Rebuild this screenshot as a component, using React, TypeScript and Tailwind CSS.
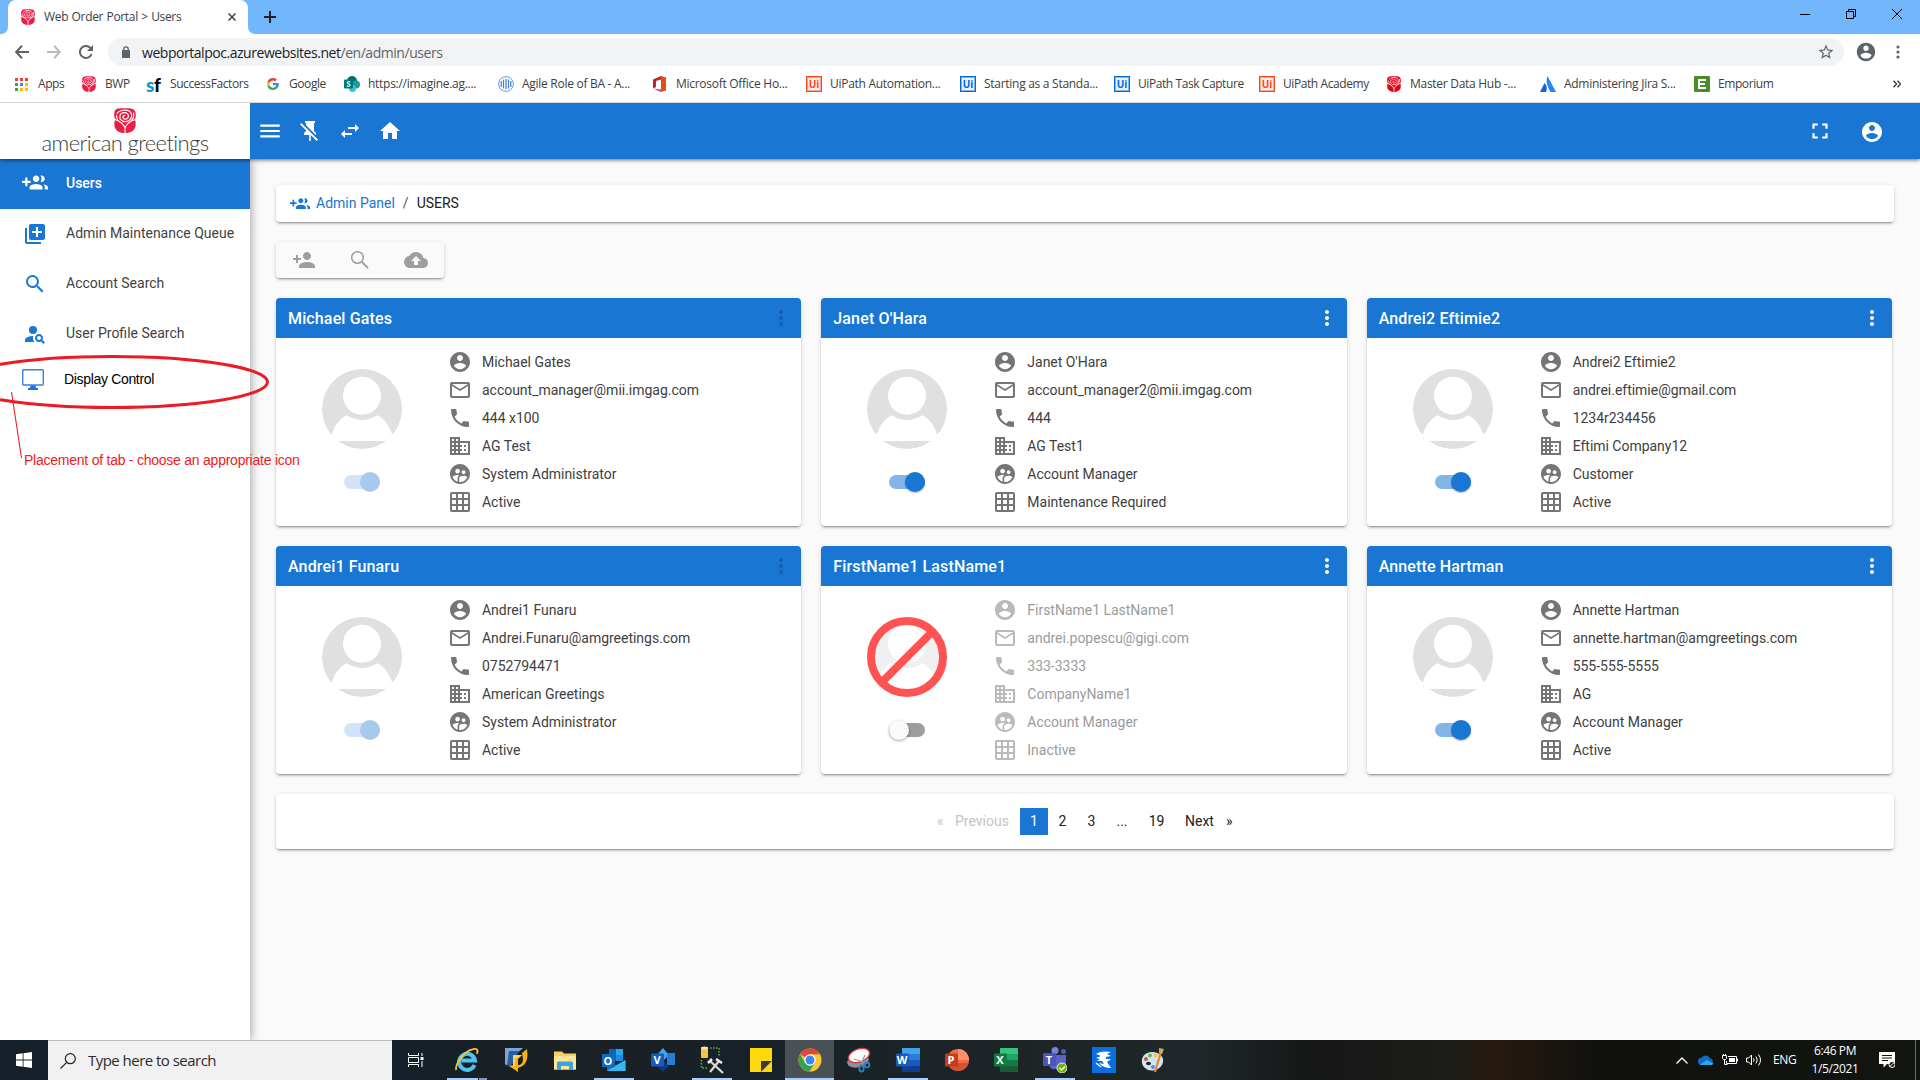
import React from 'react';
import type { ReactNode } from 'react';
import {
  MdLibraryAdd, MdSearch, MdPersonSearch, MdHome, MdFullscreen,
  MdPersonAdd, MdBackup, MdMoreVert, MdMailOutline, MdPhone, MdBusiness,
  MdGridOn, MdSwapHoriz, MdMenu, MdStarBorder,
} from 'react-icons/md';

/* ---------- shared icons ---------- */

function GroupAdd({ className }: { className?: string }) {
  return (
    <svg viewBox="0 0 24 24" className={className} fill="currentColor">
      <path d="M8 10H5V7H3v3H0v2h3v3h2v-3h3v-2zm10 1c1.66 0 2.99-1.34 2.99-3S19.66 5 18 5c-.32 0-.63.05-.91.14.57.81.9 1.79.9 2.86s-.34 2.04-.9 2.86c.28.09.59.14.91.14zm-5 0c1.66 0 2.99-1.34 2.99-3S14.66 5 13 5c-1.66 0-3 1.34-3 3s1.34 3 3 3zm6.62 2.160c.83.73 1.38 1.660 1.38 2.840v2h3v-2c0-1.540-2.370-2.490-4.380-2.840zM13 13c-2 0-6 1-6 3v2h12v-2c0-2-4-3-6-3z" />
    </svg>
  );
}

function AccountCircle({ className }: { className?: string }) {
  return (
    <svg viewBox="0 0 24 24" className={className} fill="currentColor">
      <path d="M12 2C6.48 2 2 6.48 2 12s4.48 10 10 10 10-4.48 10-10S17.52 2 12 2zm0 3c1.66 0 3 1.34 3 3s-1.34 3-3 3-3-1.34-3-3 1.34-3 3-3zm0 14.2c-2.5 0-4.71-1.28-6-3.22.03-1.99 4-3.08 6-3.08 1.99 0 5.97 1.09 6 3.08-1.29 1.94-3.5 3.22-6 3.22z" />
    </svg>
  );
}

function SupervisedCircle({ className }: { className?: string }) {
  return (
    <svg viewBox="0 0 24 24" className={className} fill="currentColor">
      <path d="M11.99 2c-5.52 0-10 4.48-10 10s4.48 10 10 10 10-4.48 10-10-4.48-10-10-10zm3.61 6.34c1.07 0 1.93.86 1.93 1.93 0 1.07-.86 1.93-1.93 1.93-1.07 0-1.93-.86-1.93-1.93-.01-1.07.86-1.93 1.93-1.93zm-6-1.58c1.3 0 2.36 1.06 2.36 2.36 0 1.3-1.06 2.36-2.36 2.36s-2.36-1.06-2.36-2.36c0-1.31 1.05-2.36 2.36-2.36zm0 9.13v3.75c-2.4-.75-4.3-2.6-5.14-4.96 1.05-1.12 3.67-1.69 5.14-1.69.53 0 1.2.08 1.9.22-1.64.87-1.9 2.02-1.9 2.68zM11.99 20c-.27 0-.53-.01-.79-.04v-4.07c0-1.42 2.94-2.13 4.4-2.13 1.07 0 2.92.39 3.84 1.15-1.17 2.97-4.06 5.09-7.45 5.09z" />
    </svg>
  );
}

function Rose({ className, color = '#ee1b45' }: { className?: string; color?: string }) {
  return (
    <svg viewBox="0 0 22 25" className={className} fill="none">
      <path d="M4 .6C8 .2 15 0 18 .8 21 1.600 22 5 21.800 8c-.1 1.500-.6 2.500-1.200 3.400C22 13 22 17 21 20c-1.500 3-5 5-10 5S2.500 23 1 20c-1-3-1-7 .5-8.600C.4 10 0 8 .2 5.500.4 3 1.500.900 4 .6z" fill={color} />
      <g stroke="#fff" strokeWidth="1.150" strokeLinecap="round">
        <path d="M3 5.500C5 2.500 10 1.600 13.500 2.400c4 .9 5 4.600 3.500 7.600-1.300 2.600-4 3.800-6.500 3.600-3-.3-5-2.500-4.700-5 .2-2.300 2.200-4 4.700-4 2.300 0 4 1.500 3.900 3.500-.1 1.900-1.500 3.100-3.200 3-1.500-.1-2.400-1.200-2.200-2.300.2-.9 1-1.400 1.800-1.200" />
        <path d="M1.200 11.800c3 .8 7.500 3.500 9.800 7.700 2.300-4.200 6.800-6.900 9.800-7.700M11 19.500V25M2.600 7.500c-.4 3 1.500 6.500 5.400 7.800M19.600 5c.5 4.500-1.600 8.500-5.600 10.300" />
      </g>
    </svg>
  );
}

/* ---------- browser chrome ---------- */

function TabStrip() {
  return (
    <div className="flex h-[34px] items-stretch bg-[#72b7fc]">
      <div className="flex w-2 items-end bg-white"><div className="h-full w-2 rounded-br-[7px] bg-[#72b7fc]" /></div>
      <div className="flex w-[240px] items-center rounded-t-lg bg-white pl-[13px]">
        <Rose className="h-4 w-[14px]" />
        <span className="ml-[9px] w-[184px] whitespace-nowrap text-[12px] tracking-[-0.33px] text-[#3c4043] [word-spacing:0.6px]">Web Order Portal &gt; Users</span>
        <svg viewBox="0 0 8 8" className="h-2 w-2" stroke="#3c4043" strokeWidth="1.500"><path d="M.5.5l7 7M7.500.5l-7 7" /></svg>
      </div>
      <div className="flex flex-1 bg-white">
        <div className="flex flex-1 items-center rounded-bl-[7px] bg-[#72b7fc] pl-4">
          <svg viewBox="0 0 12 12" className="h-3 w-3" stroke="#202124" strokeWidth="2"><path d="M6 0v12M0 6h12" /></svg>
          <div className="ml-auto flex items-center gap-9 pr-[18px] pb-[6px] text-black">
            <svg viewBox="0 0 10 10" className="h-[10px] w-[10px]" stroke="currentColor"><path d="M0 5.500h10" /></svg>
            <svg viewBox="0 0 10 10" className="h-[10px] w-[10px]" stroke="currentColor" fill="none"><path d="M.5 2.500h7v7h-7zM2.500 2.500v-2h7v7h-2" /></svg>
            <svg viewBox="0 0 10 10" className="h-[10px] w-[10px]" stroke="currentColor"><path d="M0 0l10 10M10 0L0 10" /></svg>
          </div>
        </div>
      </div>
    </div>
  );
}

function AddressRow() {
  return (
    <div className="flex h-9 items-center text-[#5f6368]">
      <div className="flex w-[108px] items-center gap-[18px] pl-[15px]">
        <svg viewBox="0 0 14 14" className="h-[14px] w-[14px]" fill="none" stroke="#5f6368" strokeWidth="2"><path d="M14 7H1.500M7 .8L1.200 7 7 13.200" /></svg>
        <svg viewBox="0 0 14 14" className="h-[14px] w-[14px]" fill="none" stroke="#babcbe" strokeWidth="2"><path d="M0 7h12.500M7 .8L12.800 7 7 13.200" /></svg>
        <svg viewBox="0 0 14 14" className="h-[14px] w-[14px]" fill="none" stroke="#5f6368" strokeWidth="2"><path d="M12.600 9A6 6 0 1 1 11.300 2.800L12.500 4" /><path d="M14 0v6H8z" fill="#5f6368" stroke="none" /></svg>
      </div>
      <div className="flex h-7 w-[1736px] items-center rounded-full bg-[#f1f3f4] pl-[14px] pr-[9px]">
        <svg viewBox="0 0 8 12" className="h-3 w-2"><path d="M1.800 5V3a2.200 2.200 0 0 1 4.400 0v2" fill="none" stroke="#5f6368" strokeWidth="1.300" /><path d="M0 4h8v8H0z" fill="#5f6368" /></svg>
        <span className="ml-3 whitespace-nowrap text-[14px] tracking-[-0.46px] text-[#5f6368]"><span className="text-[#202124]">webportalpoc.azurewebsites.net</span>/en/admin/users</span>
        <MdStarBorder className="ml-auto h-[18px] w-[18px]" />
      </div>
      <AccountCircle className="ml-[11px] h-[22px] w-[22px]" />
      <svg viewBox="0 0 4 14" className="ml-[19px] h-[14px] w-1" fill="#5f6368"><circle cx="2" cy="2" r="1.600" /><circle cx="2" cy="7" r="1.600" /><circle cx="2" cy="12" r="1.600" /></svg>
    </div>
  );
}

function UiBadge({ blue }: { blue?: boolean }) {
  return (
    <div className={blue ? 'h-4 w-4 bg-[#0067df] p-[1px] text-[#0067df]' : 'h-4 w-4 bg-[#fa4616] p-[1px] text-[#fa4616]'}>
      <div className={blue ? 'flex h-full w-full items-center justify-center border border-[#7fb3ef] bg-[#eaf3ff] text-[10px] font-bold leading-none' : 'flex h-full w-full items-center justify-center border border-[#fca28a] bg-[#fff0ec] text-[10px] font-bold leading-none'}>Ui</div>
    </div>
  );
}

const dotColors = ['#ea4335', '#ea4335', '#ea4335', '#34a853', '#4285f4', '#fbbc05', '#34a853', '#fbbc05', '#fbbc05'];

const bookmarks: { w: string; gap: string; label: string; icon: ReactNode }[] = [
  { w: 'w-[67px]', gap: 'gap-[10px]', label: 'Apps', icon: (
    <svg viewBox="0 0 13 13" className="h-[13px] w-[13px]">{dotColors.map((c, i) => <rect key={i} x={(i % 3) * 5} y={Math.floor(i / 3) * 5} width="3" height="3" fill={c} />)}</svg>) },
  { w: 'w-[64px]', gap: 'gap-[9px]', label: 'BWP', icon: <Rose className="h-4 w-[14px]" /> },
  { w: 'w-[121px]', gap: 'gap-[8px]', label: 'SuccessFactors', icon: (
    <div className="flex h-4 w-4 items-end font-['Lato'] text-[19px] font-black leading-[15px] tracking-[-0.5px]"><span className="text-[#0a9ad9]">s</span><span className="text-black">f</span></div>) },
  { w: 'w-[77px]', gap: 'gap-[10px]', label: 'Google', icon: (
    <svg viewBox="0 0 48 48" className="h-[12px] w-[12px]"><path fill="#4285f4" d="M47 24.500c0-1.600-.1-3.200-.4-4.700H24v9h12.900a11 11 0 0 1-4.800 7.200v6h7.700c4.600-4.200 7.200-10.300 7.200-17.500z" /><path fill="#34a853" d="M24 48c6.500 0 12-2.100 15.900-5.800l-7.700-6A14.500 14.500 0 0 1 10.500 28.600h-8v6.200A24 24 0 0 0 24 48z" /><path fill="#fbbc05" d="M10.500 28.600a14.400 14.400 0 0 1 0-9.200v-6.200h-8a24 24 0 0 0 0 21.600z" /><path fill="#ea4335" d="M24 9.500c3.500 0 6.700 1.200 9.200 3.600l6.900-6.900A24 24 0 0 0 2.500 13.200l8 6.200A14.300 14.300 0 0 1 24 9.500z" /></svg>) },
  { w: 'w-[154px]', gap: 'gap-[8px]', label: 'https://imagine.ag....', icon: (
    <svg viewBox="0 0 16 16" className="h-4 w-4"><circle cx="8" cy="5" r="5" fill="#036c70" /><circle cx="12" cy="8.500" r="4" fill="#1a9ba1" /><circle cx="8.500" cy="12.500" r="3.500" fill="#37c6d0" /><rect y="3.500" width="9" height="9" rx="1" fill="#03787c" /><path d="M6.200 6.100C5 5.300 3 5.700 3.100 6.800c.1 1.200 3 .9 3 2.300 0 1.200-2 1.500-3.200.6" stroke="#fff" fill="none" strokeWidth="1.100" /></svg>) },
  { w: 'w-[155px]', gap: 'gap-[8px]', label: 'Agile Role of BA - A...', icon: (
    <svg viewBox="0 0 16 16" className="h-4 w-4" fill="none" stroke="#5b9bea"><circle cx="8" cy="8" r="7.400" /><path d="M8 3v10M5.500 3.600v8.800M10.500 3.600v8.800M3.200 5v6M12.800 5v6" strokeWidth="1.200" stroke="#3f7be0" /></svg>) },
  { w: 'w-[153px]', gap: 'gap-[10px]', label: 'Microsoft Office Ho...', icon: (
    <svg viewBox="0 0 13 16" className="h-4 w-[13px]"><path d="M8 0L0 3.500v9L3 11V5l5-1.500z" fill="#c2261a" /><path d="M8 0l5 1.500v13L8 16z" fill="#e64a19" /><path d="M0 12.500L8 16v-2.500L3 13z" fill="#d13a72" /></svg>) },
  { w: 'w-[154px]', gap: 'gap-[8px]', label: 'UiPath Automation...', icon: <UiBadge /> },
  { w: 'w-[154px]', gap: 'gap-[8px]', label: 'Starting as a Standa...', icon: <UiBadge blue /> },
  { w: 'w-[145px]', gap: 'gap-[8px]', label: 'UiPath Task Capture', icon: <UiBadge blue /> },
  { w: 'w-[128px]', gap: 'gap-[8px]', label: 'UiPath Academy', icon: <UiBadge /> },
  { w: 'w-[153px]', gap: 'gap-[9px]', label: 'Master Data Hub -...', icon: <Rose className="h-4 w-[14px]" color="#e60012" /> },
  { w: 'w-[154px]', gap: 'gap-[8px]', label: 'Administering Jira S...', icon: (
    <svg viewBox="0 0 16 16" className="h-4 w-4"><path d="M7.500 0L16 16h-5.500C7 10 5.500 5 7.500 0z" fill="#2684ff" /><path d="M4.500 7C7 9.500 7.500 12.500 6 16H0z" fill="#1464dc" /></svg>) },
  { w: 'w-[100px]', gap: 'gap-[8px]', label: 'Emporium', icon: (
    <div className="flex h-4 w-4 items-center justify-center rounded-[1px] bg-[#4b8b2b]"><svg viewBox="0 0 8 10" className="h-[10px] w-2" stroke="#fff" strokeWidth="2" fill="none"><path d="M8 1H1v8h7M1 5h6" /></svg></div>) },
];

function BookmarksBar() {
  return (
    <div className="flex h-[33px] items-center border-b border-[#d5d7da] pb-[4px] pl-[15px]">
      {bookmarks.map((b) => (
        <div key={b.label} className={`flex shrink-0 items-center ${b.w} ${b.gap}`}>
          <div className="shrink-0">{b.icon}</div>
          <span className={b.label.endsWith('...') ? 'whitespace-nowrap text-[12px] tracking-[-0.28px] text-[#3c4043]' : 'whitespace-nowrap text-[12px] tracking-[-0.42px] text-[#3c4043]'}>{b.label}</span>
        </div>
      ))}
      <svg viewBox="0 0 8 8" className="ml-auto mr-[19px] h-2 w-2" fill="none" stroke="#3c4043" strokeWidth="1.500"><path d="M.5.800L3.500 4l-3 3.200M4.500.800L7.500 4l-3 3.200" /></svg>
    </div>
  );
}

/* ---------- application ---------- */

function Logo() {
  return (
    <div className="flex h-14 w-[250px] shrink-0 flex-col items-center bg-white pt-[5px]">
      <Rose className="h-[25px] w-[22px]" />
      <span className="-mt-[2px] whitespace-nowrap font-['Lato'] text-[22px] font-light leading-[24px] tracking-[-0.62px] text-[#3c3d3f]">american greetings</span>
    </div>
  );
}

function AppHeader() {
  return (
    <header className="relative z-20 flex h-14 shadow-[0_1px_4px_rgba(0,0,0,0.6)]">
      <Logo />
      <div className="flex flex-1 items-center bg-[#1976d2] pl-[7px] text-white">
        <MdMenu className="h-[26px] w-[26px]" />
        <svg viewBox="0 0 24 24" className="ml-[15px] h-6 w-6" fill="currentColor"><path d="M2 5.270L3.280 4 20 20.720 18.730 22l-5.930-5.930V22h-1.600v-6H6v-2l2-2v-.73L2 5.270M16 12l2 2v2h-.18L8 6.180V4H7V2h10v2h-1v8z" /></svg>
        <MdSwapHoriz className="ml-4 h-6 w-6" />
        <MdHome className="ml-4 h-6 w-6" />
        <MdFullscreen className="ml-auto h-[26px] w-[26px]" />
        <AccountCircle className="mt-[2px] ml-[27px] mr-9 h-6 w-6" />
      </div>
    </header>
  );
}

function Sidebar() {
  return (
    <aside className="relative z-10 w-[250px] shrink-0 bg-white text-[14px] text-[#424242] shadow-[2px_0_8px_rgba(0,0,0,0.3)]">
      <div className="flex h-[50px] items-center bg-[#1976d2] pb-[2px] pl-[22px] font-medium text-white">
        <GroupAdd className="h-[26px] w-[26px]" /><span className="ml-[18px]">Users</span>
      </div>
      <div className="flex h-[50px] items-center pb-[2px] pl-[23px]">
        <MdLibraryAdd className="mt-[2px] h-6 w-6 text-[#1976d2]" /><span className="ml-[19px]">Admin Maintenance Queue</span>
      </div>
      <div className="flex h-[50px] items-center pb-[2px] pl-[23px]">
        <MdSearch className="mt-[2px] h-6 w-6 text-[#1976d2]" /><span className="ml-[19px]">Account Search</span>
      </div>
      <div className="flex h-[50px] items-center pb-[2px] pl-[23px]">
        <MdPersonSearch className="mt-[2px] h-6 w-6 text-[#1976d2]" /><span className="ml-[19px]">User Profile Search</span>
      </div>
      <div className="flex h-10 items-center pl-[22px]">
        <svg viewBox="0 0 22 21" className="h-[21px] w-[22px]" fill="none" stroke="#3b7ee8"><rect x=".7" y=".7" width="20.600" height="15.300" rx="1" strokeWidth="1.400" /><path d="M8.500 16.500h5l.5 2.500h2v2H6v-2h2z" fill="#1f6fe0" stroke="none" /></svg>
        <span className="ml-5 font-['Liberation_Sans'] tracking-[-0.33px] text-black">Display Control</span>
      </div>
    </aside>
  );
}

type User = { name: string; email: string; phone: string; company: string; role: string; status: string; locked?: boolean; inactive?: boolean };

const users: User[] = [
  { name: 'Michael Gates', email: 'account_manager@mii.imgag.com', phone: '444 x100', company: 'AG Test', role: 'System Administrator', status: 'Active', locked: true },
  { name: "Janet O'Hara", email: 'account_manager2@mii.imgag.com', phone: '444', company: 'AG Test1', role: 'Account Manager', status: 'Maintenance Required' },
  { name: 'Andrei2 Eftimie2', email: 'andrei.eftimie@gmail.com', phone: '1234r234456', company: 'Eftimi Company12', role: 'Customer', status: 'Active' },
  { name: 'Andrei1 Funaru', email: 'Andrei.Funaru@amgreetings.com', phone: '0752794471', company: 'American Greetings', role: 'System Administrator', status: 'Active', locked: true },
  { name: 'FirstName1 LastName1', email: 'andrei.popescu@gigi.com', phone: '333-3333', company: 'CompanyName1', role: 'Account Manager', status: 'Inactive', inactive: true },
  { name: 'Annette Hartman', email: 'annette.hartman@amgreetings.com', phone: '555-555-5555', company: 'AG', role: 'Account Manager', status: 'Active' },
];

function Avatar({ blocked }: { blocked?: boolean }) {
  return (
    <svg viewBox="0 0 80 80" className="h-20 w-20">
      <circle cx="40" cy="40" r="40" fill={blocked ? '#f0f0f0' : '#e0e0e0'} />
      <path d="M-1 65.300H10C12 58 17 50 24.700 46.300Q32 51 40 51T55.300 46.300C63 50 68 58 70 65.300H81V72H-1z" fill="#fff" />
      <circle cx="40" cy="26.700" r="19" fill="#fff" />
      {blocked && (
        <g stroke="#ff5252" fill="none">
          <circle cx="40" cy="40" r="36" strokeWidth="8" />
          <path d="M65 15L15 65" strokeWidth="8" />
        </g>
      )}
    </svg>
  );
}

function Toggle({ user }: { user: User }) {
  const bar = user.inactive ? 'bg-[#9e9e9e]' : user.locked ? 'bg-[#d1e3f6]' : 'bg-[#83b5e7]';
  const knob = user.inactive ? 'bg-[#fafafa] shadow-[0_1px_3px_rgba(0,0,0,0.35)]' : user.locked ? 'bg-[#a7c9ee]' : 'bg-[#1976d2] shadow-[0_1px_2px_rgba(0,0,0,0.3)]';
  return (
    <div className={`flex h-[14px] w-9 items-center rounded-full ${bar} ${user.inactive ? '' : 'justify-end'}`}>
      <div className={`h-5 w-5 shrink-0 rounded-full ${knob}`} />
    </div>
  );
}

const cardShadow = 'shadow-[0_3px_1px_-2px_rgba(0,0,0,0.2),0_2px_2px_0_rgba(0,0,0,0.14),0_1px_5px_0_rgba(0,0,0,0.12)]';

function UserCard({ user }: { user: User }) {
  const rows: [ReactNode, string][] = [
    [<AccountCircle className="h-6 w-6" />, user.name],
    [<MdMailOutline className="h-6 w-6" />, user.email],
    [<MdPhone className="h-6 w-6" />, user.phone],
    [<MdBusiness className="h-6 w-6" />, user.company],
    [<SupervisedCircle className="h-6 w-6" />, user.role],
    [<MdGridOn className="h-6 w-6" />, user.status],
  ];
  return (
    <section className={`h-[228px] overflow-hidden rounded bg-white ${cardShadow}`}>
      <div className="flex h-10 items-center justify-between bg-[#1976d2] pl-3 pr-2">
        <h2 className="pt-[2px] text-[16px] font-medium leading-6 tracking-[0.14px] text-white">{user.name}</h2>
        <MdMoreVert className={user.locked ? 'h-6 w-6 text-[#1560ac]' : 'h-6 w-6 text-white'} />
      </div>
      <div className="flex">
        <div className="flex w-[172px] flex-col items-center gap-[26px] pt-[31px]">
          <Avatar blocked={user.inactive} />
          <Toggle user={user} />
        </div>
        <ul className="pt-[10px]">
          {rows.map(([icon, text], i) => (
            <li key={i} className="flex h-7 items-center gap-[10px]">
              <span className={user.inactive ? 'text-[#bababa]' : 'text-[#757575]'}>{icon}</span>
              <span className={user.inactive ? 'text-[14px] tracking-[-0.02px] text-[#9b9b9b]' : 'text-[14px] tracking-[-0.02px] text-[#404040]'}>{text}</span>
            </li>
          ))}
        </ul>
      </div>
    </section>
  );
}

function Pagination() {
  return (
    <nav className={`mt-5 flex h-[55px] w-[1618px] items-center rounded bg-white pl-[661px] text-[14px] text-[#212121] ${cardShadow}`}>
      <span className="w-[18px] text-[#c4c4c4]">«</span>
      <span className="w-[65px] text-[#c4c4c4]">Previous</span>
      <span className="flex h-[27px] w-7 items-center justify-center bg-[#1976d2] text-white">1</span>
      <span className="w-[29px] text-center">2</span>
      <span className="w-[29px] text-center">3</span>
      <span className="w-8 text-center">...</span>
      <span className="w-[37px] text-center">19</span>
      <span className="ml-[10px] w-[41px]">Next</span>
      <span>»</span>
    </nav>
  );
}

function Content() {
  return (
    <main className="flex-1 bg-[#fafafa] pl-[26px] pt-[26px]">
      <div className={`flex h-[37px] w-[1618px] items-center rounded bg-white pl-[14px] text-[14px] ${cardShadow}`}>
        <GroupAdd className="h-5 w-5 text-[#1976d2]" />
        <span className="ml-[6px] text-[#1976d2]">Admin Panel</span>
        <span className="mx-2 text-[#555]">/</span>
        <span className="text-[#212121]">USERS</span>
      </div>
      <div className={`mt-5 flex h-9 w-[168px] items-center rounded pl-4 text-[#9e9e9e] ${cardShadow}`}>
        <MdPersonAdd className="h-6 w-6" />
        <svg viewBox="0 0 24 24" className="ml-8 h-6 w-6" fill="none" stroke="currentColor" strokeWidth="1.500"><circle cx="9.500" cy="9.500" r="5.800" /><path d="M14 14l6 6" strokeWidth="1.800" /></svg>
        <MdBackup className="ml-8 h-6 w-6" />
      </div>
      <div className="mt-5 grid w-[1616px] grid-cols-3 gap-5">
        {users.map((u) => <UserCard key={u.name} user={u} />)}
      </div>
      <Pagination />
    </main>
  );
}

function Annotation() {
  return (
    <div className="pointer-events-none absolute left-0 top-0 z-30 h-[480px] w-[320px]">
      <svg viewBox="0 0 320 480" className="h-[480px] w-[320px]" fill="none" stroke="#ed1c24">
        <ellipse cx="112" cy="382" rx="155.500" ry="25.500" strokeWidth="3" />
        <path d="M11.500 392L21.500 458" strokeWidth="1.100" />
      </svg>
      <span className="absolute left-[24px] top-[450px] whitespace-nowrap font-['Liberation_Sans'] text-[14px] leading-5 tracking-[-0.24px] text-[#ed1c24]">Placement of tab - choose an appropriate icon</span>
    </div>
  );
}

/* ---------- taskbar ---------- */

function OfficeIcon({ letter, dark, colors, round }: { letter: string; dark: string; colors: string[]; round?: boolean }) {
  return (
    <div className="relative h-6 w-6">
      <svg viewBox="0 0 24 24" className="h-6 w-6">
        {round ? (
          <><circle cx="13" cy="12" r="11" fill={colors[1]} /><path d="M13 1a11 11 0 0 1 11 11H13z" fill={colors[0]} /><path d="M2.500 15A11 11 0 0 0 23.500 15z" fill={colors[2]} /></>
        ) : (
          <><rect x="6" y="0" width="18" height="6.500" fill={colors[0]} /><rect x="6" y="6" width="18" height="6" fill={colors[1]} /><rect x="6" y="12" width="18" height="6" fill={colors[2]} /><rect x="6" y="18" width="18" height="6" fill={colors[3]} /></>
        )}
        <rect x="0" y="5.500" width="13" height="13" rx="1" fill={dark} />
      </svg>
      <span className="absolute left-0 top-[6px] w-[13px] text-center text-[11px] font-bold leading-[12px] text-white">{letter}</span>
    </div>
  );
}

const taskIcons: { icon: ReactNode; open?: boolean; active?: boolean; stacked?: boolean }[] = [
  { open: true, stacked: true, icon: (
    <svg viewBox="0 0 24 24" className="h-6 w-6" fill="none"><path d="M19.500 17A8 8 0 1 1 20 12.500H6.500" stroke="#4fc3f0" strokeWidth="4" /><path d="M1.500 22c-2-3 3-12 9-17C16 .5 22 0 22.500 2.500c.2 1-.2 2-.8 3.300" stroke="#f7c52c" strokeWidth="1.800" /></svg>) },
  { icon: <svg viewBox="0 0 24 25" className="h-[25px] w-6"><path d="M1 0h18l-6 6-1 7-6 5-5-1z" fill="#2a5c9e" /><path d="M1 0h18l-4 3H5L3 17l-2-1z" fill="#7ba7d8" /><path d="M9 7h9l-4 4v6c3 0 5-2 5-6l-1-6 5-4c1 8 1 16-9 19v4L5 18l5-1z" fill="#fbb016" /><path d="M9 7h9l-4 3h-3v8l-2 1z" fill="#fdd462" /></svg> },
  { icon: <svg viewBox="0 0 24 24" className="h-6 w-6"><path d="M1 3.500h8l2 2h12v16H1z" fill="#f5cf63" /><path d="M1 8h22v13.500H1z" fill="#ffe595" /><path d="M4 22v-7q0-1.500 1.500-1.500h13Q20 13.500 20 15v7h-4v-4H8v4z" fill="#35a7e0" /></svg> },
  { open: true, icon: (
    <div className="relative h-6 w-6"><svg viewBox="0 0 24 24" className="h-6 w-6"><path d="M7 1h14v12H7z" fill="#0a64c0" /><path d="M14 1h7v6h-7z" fill="#28a8ea" /><path d="M14 7h7v6h-7z" fill="#1490df" /><path d="M5 12l9 5 9.500-5v11H5z" fill="#1270c8" /><path d="M5 23l18.500-11v11z" fill="#35b8f1" /><rect y="6" width="13" height="13" rx="1" fill="#0f6cbd" /></svg><span className="absolute left-0 top-[7px] w-[13px] text-center text-[11px] font-bold leading-[12px] text-white">O</span></div>) },
  { icon: (
    <div className="relative h-6 w-6"><svg viewBox="0 0 24 24" className="h-6 w-6"><path d="M12 0l6 7-6 6-6-6z" fill="#41a5ee" /><path d="M16 5h8v12h-8z" fill="#2b7cd3" /><path d="M12 12l6 6-6 6-6-6z" fill="#10397a" /><rect y="5.500" width="13" height="13" rx="1" fill="#185abd" /></svg><span className="absolute left-0 top-[6px] w-[13px] text-center text-[11px] font-bold leading-[12px] text-white">V</span></div>) },
  { open: true, icon: (
    <svg viewBox="0 0 24 28" className="h-7 w-6" fill="none"><rect x="1" y="1" width="7" height="11" rx="1" fill="#f6c244" /><ellipse cx="4.500" cy="2" rx="3.500" ry="1.500" fill="#fbe3a0" /><path d="M10 2h9v9M1.500 14v8h7" stroke="#6fae3a" strokeWidth="1.500" strokeDasharray="1.500 1.500" /><path d="M10 26l9-11M10 15l13 12" stroke="#d9d9d9" strokeWidth="2.200" /><path d="M8 17l4-4M16 13l6 4" stroke="#eee" strokeWidth="2.500" /></svg>) },
  { icon: <svg viewBox="0 0 24 24" className="h-6 w-6"><path d="M1 0h22v13l-11 11H1z" fill="#ffd90a" /><path d="M12 13h11L12 24z" fill="#3b3a39" /><path d="M23 13v11H12z" fill="#ffd90a" /></svg> },
  { open: true, active: true, icon: (
    <svg viewBox="0 0 24 24" className="h-6 w-6"><circle cx="12" cy="12" r="11.500" fill="#fbc62f" /><path d="M12 12L2 6.200A11.500 11.500 0 0 1 22 6.200H12z" fill="#e2463a" /><path d="M2 6.200a11.500 11.500 0 0 0 9.500 17.300L17 14.500 12 12 7 14.500z" fill="#32a350" /><circle cx="12" cy="12" r="5.700" fill="#fff" /><circle cx="12" cy="12" r="4.500" fill="#4285f4" /></svg>) },
  { icon: (
    <svg viewBox="0 0 26 26" className="h-[26px] w-[26px]" fill="none"><ellipse cx="12" cy="14" rx="11" ry="6.500" transform="rotate(-12 12 14)" fill="#8f8f96" /><ellipse cx="13" cy="8.500" rx="11" ry="6.500" transform="rotate(-20 13 8.500)" fill="#fff" stroke="#d5343b" strokeWidth="1.300" /><path d="M8 12l9 3M19 8l-3 7" stroke="#999" strokeWidth="1.300" /><ellipse cx="15.500" cy="21.500" rx="2.200" ry="3.200" stroke="#2a82c8" strokeWidth="1.800" /><circle cx="21" cy="18" r="2.400" stroke="#2a82c8" strokeWidth="1.800" /></svg>) },
  { open: true, icon: <OfficeIcon letter="W" dark="#185abd" colors={['#41a5ee', '#2b7cd3', '#185abd', '#103f91']} /> },
  { icon: <OfficeIcon letter="P" dark="#c43e1c" colors={['#ff8f6b', '#ed6c47', '#d35230']} round /> },
  { icon: <OfficeIcon letter="X" dark="#107c41" colors={['#33c481', '#21a366', '#107c41', '#185c37']} /> },
  { open: true, icon: (
    <div className="relative h-[26px] w-6"><svg viewBox="0 0 24 26" className="h-[26px] w-6"><circle cx="12" cy="3.500" r="3.500" fill="#7b83eb" /><circle cx="20.500" cy="4.500" r="2.500" fill="#5059c9" /><path d="M6 8h17v8q0 6-5 6H9q-3-2-3-5z" fill="#5b62cf" /><rect y="6" width="13" height="13" rx="1" fill="#4b53bc" /><circle cx="19" cy="21" r="5" fill="#6bb700" stroke="#fff" strokeWidth=".8" /><path d="M16.500 21l2 2 3.500-3.500" fill="none" stroke="#fff" strokeWidth="1.300" /></svg><span className="absolute left-0 top-[7px] w-[13px] text-center text-[11px] font-bold leading-[12px] text-white">T</span></div>) },
  { icon: <svg viewBox="0 0 24 26" className="h-[26px] w-6"><rect width="24" height="26" fill="#0a6fe0" /><path d="M4 7C8 4 14 4 19 5l-4 2 4 2-5 1v2h5l-4 3 2 3 2 3c-4 0-9-1-12-5l5 1-2-3H5l3-2-4-1 5-2z" fill="#fff" /><path d="M4 16l5 4" stroke="#fff" strokeWidth="1.500" /></svg> },
  { icon: (
    <svg viewBox="0 0 24 26" className="h-[26px] w-6"><path d="M11 5C4 5 0 10 1 16c1 5 7 9 13 7 5-1 9-6 8-11C21 8 17 5 11 5z" fill="#cfe5f4" /><ellipse cx="7.500" cy="16.500" rx="2.500" ry="1.800" fill="#1c2529" /><circle cx="5" cy="12" r="2" fill="#e04a3f" /><circle cx="9" cy="8.500" r="2" fill="#63b54b" /><circle cx="14.500" cy="8.500" r="2" fill="#f6c343" /><circle cx="12" cy="20" r="2" fill="#4b8fe0" /><path d="M20 5l-6 20" stroke="#e8852a" strokeWidth="2.200" /><path d="M18 1l5 1-2 5-3-1z" fill="#d9a066" /></svg>) },
];

function Taskbar() {
  return (
    <footer className="flex h-10 bg-[linear-gradient(90deg,#15202a_0,#15202a_400px,#1b2023_560px,#172128_720px,#1c2426_1000px,#20272a_1200px,#151716_1310px,#1c1d1a_1440px,#26190f_1500px,#10110f_1600px,#12150f_1920px)] text-white">
      <div className="flex w-12 items-center justify-center">
        <svg viewBox="0 0 16 16" className="h-4 w-4" fill="#fff"><path d="M0 2.200L6.700 1.300v6.300H0zM7.500 1.200L16 0v7.600H7.500zM0 8.400h6.700v6.300L0 13.800zM7.500 8.400H16V16l-8.500-1.200z" /></svg>
      </div>
      <div className="flex w-[344px] items-center border-t border-[#b9b9b9] bg-[#f1f1f1] pl-3">
        <svg viewBox="0 0 16 16" className="h-4 w-4" fill="none" stroke="#222" strokeWidth="1.200"><circle cx="10.300" cy="5.700" r="5" /><path d="M6.700 9.300L.5 15.500" /></svg>
        <span className="ml-3 whitespace-nowrap text-[15px] tracking-[-0.53px] text-[#2b2b2b]">Type here to search</span>
      </div>
      <div className="flex w-[50px] items-center justify-center pr-[2px]">
        <svg viewBox="0 0 16 16" className="h-4 w-4" fill="none" stroke="#fff"><path d="M.5 1v2.500h10V1M.5 5.500h10v5H.5zM.5 15v-2.500h10V15M14 1v3M14 9v6" /><rect x="12.500" y="5" width="3" height="3" fill="#fff" stroke="none" /></svg>
      </div>
      {taskIcons.map((t, i) => (
        <div key={i} className={t.active ? 'flex w-[49px] flex-col items-center bg-[#4a5156]' : 'flex w-[49px] flex-col items-center'}>
          <div className="flex h-[38px] items-center pt-[2px]">{t.icon}</div>
          {t.open && (
            <div className={t.active ? 'flex h-[2px] w-full bg-[#a6cdfb]' : 'flex h-[2px] w-10 bg-[#a6cdfb]'}>
              {t.stacked && <div className="ml-auto h-full w-[9px] border-l border-[#1b2023] bg-[#7f9dc0]" />}
            </div>
          )}
        </div>
      ))}
      <div className="ml-auto flex items-center text-[12px]">
        <svg viewBox="0 0 12 7" className="h-[7px] w-3" fill="none" stroke="#fff" strokeWidth="1.300"><path d="M.5 6.500L6 1l5.500 5.500" /></svg>
        <svg viewBox="0 0 16 10" className="ml-[10px] h-[10px] w-4"><path d="M3.500 10a3.500 3.500 0 0 1-.3-7A5 5 0 0 1 12 3.200a3.500 3.500 0 0 1 .5 6.800z" fill="#0f6cc4" /><path d="M2 9.500L9 5l6.500 3.500q-1 1.500-3 1.500h-9q-1 0-1.500-.5z" fill="#28a8ea" /></svg>
        <svg viewBox="0 0 16 12" className="ml-2 h-3 w-4" fill="none" stroke="#fff"><path d="M6 2.500h8.500v7H4.500V7" /><path d="M7 4h6v4H7z" fill="#fff" stroke="none" /><path d="M15.500 4.500v3M.5 1.500h4v3l-1 1h-2l-1-1zM1.500 0v1.500M3.500 0v1.500M2.500 5.500v5h3" /></svg>
        <svg viewBox="0 0 17 14" className="ml-2 h-[14px] w-[17px]" fill="none" stroke="#fff"><path d="M.5 5v4h2.200L5.500 12V2L2.700 5z" /><path d="M7.500 5.300q1.200 1.700 0 3.400M10 3.500q2.500 3.500 0 7M12.500 1.500q4 5.500 0 11" /></svg>
        <span className="ml-[10px] w-[24px] tracking-[-0.4px]">ENG</span>
        <div className="ml-[13px] w-[50px] text-center leading-[18px] tracking-[-0.4px]"><div className="whitespace-nowrap">6:46 PM</div><div className="whitespace-nowrap">1/5/2021</div></div>
        <svg viewBox="0 0 16 16" className="ml-[19px] h-4 w-4"><path d="M0 0h16v12H8l-3.500 3.500V12H0z" fill="#fff" /><path d="M3 3.500h10M3 6h10M3 8.500h6" stroke="#12150f" /><circle cx="13" cy="12.500" r="3" fill="#12150f" stroke="#fff" /><path d="M11 14.500l4-4" stroke="#fff" /></svg>
        <div className="ml-5 mr-1 h-10 w-px bg-[#6a6c68]" />
      </div>
    </footer>
  );
}

export default function App() {
  return (
    <div className="relative flex h-[1080px] w-[1920px] flex-col overflow-hidden bg-white font-['Open_Sans',sans-serif]">
      <TabStrip />
      <AddressRow />
      <BookmarksBar />
      <div className="flex h-[937px] flex-col overflow-hidden font-['Roboto',sans-serif]">
        <AppHeader />
        <div className="flex flex-1"><Sidebar /><Content /></div>
      </div>
      <Annotation />
      <Taskbar />
    </div>
  );
}
